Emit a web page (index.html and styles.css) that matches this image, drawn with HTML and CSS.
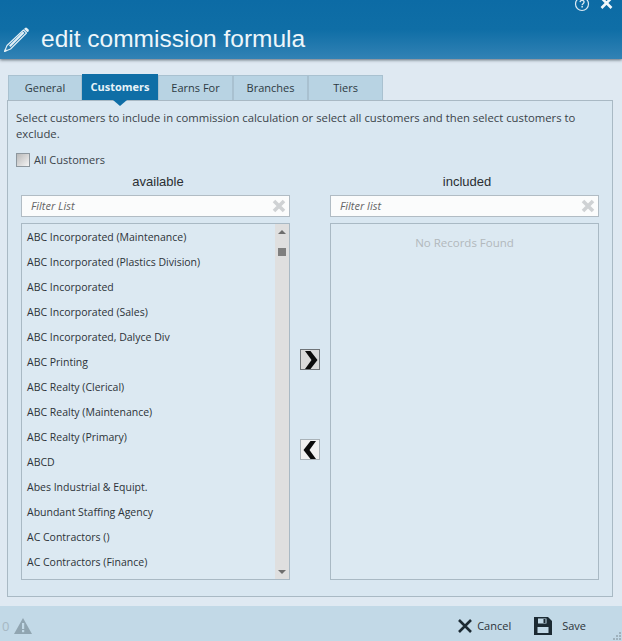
FILE: index.html
```html
<!DOCTYPE html>
<html lang="en">
<head>
  <meta charset="UTF-8">
  <title>Edit Commission Formula</title>
  <link rel="stylesheet" href="styles.css">
</head>
<body>
  <div class="dialog">
    <div class="header">
      <div class="window-icons">
        <svg class="help-icon" width="16" height="16" viewBox="0 0 16 16"><circle cx="8" cy="8" r="6.5" fill="none" stroke="#dcebf4" stroke-width="1.2"/><path d="M6 6.2c.2-1.2 1-1.8 2.1-1.8 1.2 0 2 .7 2 1.7 0 1.5-2 1.6-2 3.1" fill="none" stroke="#dcebf4" stroke-width="1.3"/><rect x="7.4" y="10" width="1.5" height="1.5" fill="#dcebf4"/></svg>
        <svg class="close-icon" width="13" height="13" viewBox="0 0 13 13"><path d="M1.5 2 L11.5 12 M11.5 2 L1.5 12" stroke="#f2f8fb" stroke-width="2.6"/></svg>
      </div>
      <div class="title-row">
        <svg class="pencil" width="27" height="27" viewBox="0 0 27 27"><path d="M20.5 4 L23.5 7 L7.5 23 L1.5 25.5 L4 19.5 Z" fill="none" stroke="#e4f0f6" stroke-width="1.1" stroke-linejoin="round"/><path d="M6 19.5 L20 5.5 L21.5 7 L7.5 21 Z" fill="#e4f0f6"/><path d="M22 2 Q23 1 24 2 L25.5 3.5 Q26.3 4.5 25.5 5.5 L24.5 6.3 L21 3 Z" fill="#e4f0f6"/><path d="M1 26 L2.2 22.5 L4.5 24.8 Z" fill="#e4f0f6"/></svg>
        <h1 class="title">edit commission formula</h1>
      </div>
    </div>

    <div class="content">
      <div class="tabs">
        <div class="tab tab-general">General</div>
        <div class="tab tab-active">Customers</div>
        <div class="tab">Earns For</div>
        <div class="tab">Branches</div>
        <div class="tab">Tiers</div>
      </div>
      <div class="panel">
        <p class="intro">Select customers to include in commission calculation or select all customers and then select customers to exclude.</p>
        <label class="all-check"><span class="checkbox"></span><span class="all-label">All Customers</span></label>

        <div class="columns">
          <div class="column">
            <div class="column-title">available</div>
            <div class="filter"><span>Filter List</span><svg class="clear" width="14" height="14" viewBox="0 0 14 14"><path d="M2 2 L12 12 M12 2 L2 12" stroke="#cfd2d4" stroke-width="3.6"/></svg></div>
            <div class="list">
              <ul class="items">
                <li>ABC Incorporated (Maintenance)</li>
                <li>ABC Incorporated (Plastics Division)</li>
                <li>ABC Incorporated</li>
                <li>ABC Incorporated (Sales)</li>
                <li>ABC Incorporated, Dalyce Div</li>
                <li>ABC Printing</li>
                <li>ABC Realty (Clerical)</li>
                <li>ABC Realty (Maintenance)</li>
                <li>ABC Realty (Primary)</li>
                <li>ABCD</li>
                <li>Abes Industrial &amp; Equipt.</li>
                <li>Abundant Staffing Agency</li>
                <li>AC Contractors ()</li>
                <li>AC Contractors (Finance)</li>
              </ul>
              <div class="scrollbar">
                <span class="arrow-up"></span>
                <span class="thumb"></span>
                <span class="arrow-down"></span>
              </div>
            </div>
          </div>

          <div class="movers">
            <button class="move move-right"><svg width="15" height="18" viewBox="0 0 15 18"><path d="M2 0 H7.5 L14.5 9 L7.5 18 H2 L8.5 9 Z" fill="#0c0c0c"/></svg></button>
            <button class="move move-left"><svg width="15" height="18" viewBox="0 0 15 18"><path d="M13 0 H7.5 L.5 9 L7.5 18 H13 L6.5 9 Z" fill="#0c0c0c"/></svg></button>
          </div>

          <div class="column">
            <div class="column-title">included</div>
            <div class="filter"><span>Filter list</span><svg class="clear" width="14" height="14" viewBox="0 0 14 14"><path d="M2 2 L12 12 M12 2 L2 12" stroke="#cfd2d4" stroke-width="3.6"/></svg></div>
            <div class="list list-empty">No Records Found</div>
          </div>
        </div>
      </div>
    </div>

    <div class="footer">
      <div class="alerts">
        <span class="alert-count">0</span>
        <svg width="18" height="16" viewBox="0 0 18 16"><path d="M9 0 L18 16 H0 Z" fill="#90a5b1"/><rect x="8" y="5" width="2.2" height="6" fill="#c2d9e7"/><rect x="8" y="12" width="2.2" height="2.2" fill="#c2d9e7"/></svg>
      </div>
      <div class="actions">
        <div class="action action-cancel">
          <svg width="14" height="14" viewBox="0 0 14 14"><path d="M1 1 L13 13 M13 1 L1 13" stroke="#1c2a33" stroke-width="2.6"/></svg>
          <span class="action-label">Cancel</span>
        </div>
        <div class="action action-save">
          <svg width="18" height="18" viewBox="0 0 18 18"><path d="M0 0 H14 L18 4 V18 H0 Z" fill="#1c2a33"/><rect x="4" y="1.5" width="8.5" height="5" fill="#c2d9e7"/><rect x="9.5" y="2" width="2" height="4" fill="#1c2a33"/><rect x="3.5" y="10" width="11" height="6" fill="#c2d9e7"/></svg>
          <span class="action-label">Save</span>
        </div>
      </div>
      <svg class="grip" width="9" height="9" viewBox="0 0 9 9"><g fill="#9fb2bd"><rect x="6" y="0" width="2" height="2"/><rect x="3" y="3" width="2" height="2"/><rect x="6" y="3" width="2" height="2"/><rect x="0" y="6" width="2" height="2"/><rect x="3" y="6" width="2" height="2"/><rect x="6" y="6" width="2" height="2"/></g></svg>
    </div>
  </div>
</body>
</html>
```

FILE: styles.css
```css
html, body {
  margin: 0;
  height: 100%;
}
body {
  font-family: "Open Sans", "Noto Sans", Arial, sans-serif;
  font-size: 11px;
  color: #333;
  background-color: #dfe9f2;
  overflow: hidden;
}
.dialog {
  display: flex;
  flex-direction: column;
  height: 641px;
}
.header {
  height: 59px;
  flex: none;
  background: linear-gradient(to bottom, #0c6ba5 0%, #0f6ea6 50%, #3282b5 100%);
  box-shadow: 0 1px 3px rgba(40, 50, 60, 0.7);
  position: relative;
  z-index: 2;
  box-sizing: border-box;
}
.window-icons {
  position: absolute;
  top: -4px;
  right: 9px;
  display: flex;
  align-items: flex-start;
  gap: 10px;
}
.title-row {
  display: flex;
  align-items: center;
  gap: 11px;
  padding: 24px 0 0 3px;
}
.pencil {
  flex: none;
}
.title {
  margin: 0;
  font-family: "Liberation Sans", Arial, sans-serif;
  font-size: 24.5px;
  font-weight: normal;
  line-height: 30px;
  color: #eef6fa;
}
.content {
  flex: 1;
  display: flex;
  flex-direction: column;
  padding: 16px 9px 9px 7px;
  min-height: 0;
}
.tabs {
  display: flex;
  padding-left: 1px;
  height: 25px;
  position: relative;
  z-index: 1;
}
.tab {
  width: 75px;
  box-sizing: border-box;
  background-color: #b8d3e3;
  border: 1px solid #a9c1d0;
  border-bottom: none;
  text-align: center;
  line-height: 24px;
  color: #2d3a42;
  font-size: 11px;
}
.tab-general {
  width: 74px;
}
.tab-active {
  width: 76px;
  margin-top: -1px;
  height: 26px;
  background-color: #0f6ea6;
  border-color: #0f6ea6;
  color: #e8f3f8;
  font-weight: 700;
  line-height: 23px;
  position: relative;
}
.tab-active::after {
  content: "";
  position: absolute;
  left: 50%;
  bottom: -6px;
  margin-left: -7px;
  border-left: 7px solid transparent;
  border-right: 7px solid transparent;
  border-top: 6px solid #0f6ea6;
}
.panel {
  flex: 1;
  background-color: #d9e7f1;
  border: 1px solid #a9b9c4;
  padding: 9px 14px 16px 8px;
  display: flex;
  flex-direction: column;
  min-height: 0;
}
.intro {
  margin: 0;
  font-size: 11.3px;
  line-height: 16px;
  color: #3a4349;
}
.all-check {
  display: flex;
  align-items: center;
  gap: 4px;
  margin-top: 10px;
  height: 16px;
  color: #3a4349;
}
.all-label {
  padding-bottom: 2px;
}
.checkbox {
  width: 12px;
  height: 12px;
  border: 1px solid #8d979e;
  background: linear-gradient(135deg, #b9b9b9, #f4f4f4);
}
.columns {
  flex: 1;
  display: flex;
  min-height: 0;
  margin-top: 6px;
  padding-left: 5px;
}
.column {
  width: 269px;
  flex: none;
  display: flex;
  flex-direction: column;
}
.column-title {
  font-family: "Liberation Sans", Arial, sans-serif;
  font-size: 13px;
  line-height: 16px;
  text-align: center;
  color: #2b2f33;
  margin-left: 5px;
}
.filter {
  height: 22px;
  margin-top: 5px;
  box-sizing: border-box;
  background-color: #fbfcfc;
  border: 1px solid #b1bcc4;
  padding: 0 9px 2px;
  display: flex;
  align-items: center;
  justify-content: space-between;
  font-style: italic;
  color: #666;
}
.clear {
  margin: 2px -6px 0 0;
}
.list {
  flex: 1;
  margin-top: 6px;
  box-sizing: border-box;
  border: 1px solid #a9b9c4;
  background-color: #dce9f2;
  display: flex;
  min-height: 0;
}
.list-empty {
  display: block;
  text-align: center;
  padding-top: 11px;
  color: #b2b8bc;
  font-size: 11.5px;
}
.items {
  flex: 1;
  list-style: none;
  margin: 0;
  padding: 1px 0 0 5px;
  overflow: hidden;
}
.items li {
  height: 25px;
  line-height: 25px;
  font-size: 10.5px;
  color: #2c3338;
  white-space: nowrap;
}
.scrollbar {
  width: 14px;
  flex: none;
  background-color: #dfdfdf;
  position: relative;
}
.thumb {
  position: absolute;
  top: 24px;
  left: 3px;
  width: 8px;
  height: 8px;
  background-color: #7f7f7f;
}
.arrow-up, .arrow-down {
  position: absolute;
  left: 3px;
  border-left: 4px solid transparent;
  border-right: 4px solid transparent;
}
.arrow-up {
  top: 6px;
  border-bottom: 4px solid #6e6e6e;
}
.arrow-down {
  bottom: 5px;
  border-top: 4px solid #6e6e6e;
}
.movers {
  width: 40px;
  flex: none;
  box-sizing: border-box;
  padding: 175px 0 0 10px;
  display: flex;
  flex-direction: column;
  gap: 69px;
}
.move {
  width: 20px;
  height: 21px;
  padding: 0;
  background-color: #f1f1f1;
  border: 1px solid #a9b2b8;
  display: flex;
  align-items: center;
  justify-content: center;
}
.move-right {
  background-color: #dadada;
  border-color: #6f7478;
}
.footer {
  height: 35px;
  flex: none;
  box-sizing: border-box;
  padding: 4px 36px 0 0;
  background-color: #c2d9e7;
  display: flex;
  align-items: center;
  justify-content: space-between;
  position: relative;
}
.alerts {
  display: flex;
  align-items: center;
  gap: 5px;
  padding-left: 2px;
}
.alert-count {
  color: #a6b8c3;
  font-size: 13px;
}
.actions {
  display: flex;
  align-items: center;
  gap: 23px;
}
.action {
  display: flex;
  align-items: center;
  gap: 5px;
  color: #2c3338;
  font-size: 11px;
}
.action-label {
  padding-bottom: 1px;
}
.action-save {
  gap: 10px;
}
.grip {
  position: absolute;
  right: 0;
  bottom: 0;
}
```
